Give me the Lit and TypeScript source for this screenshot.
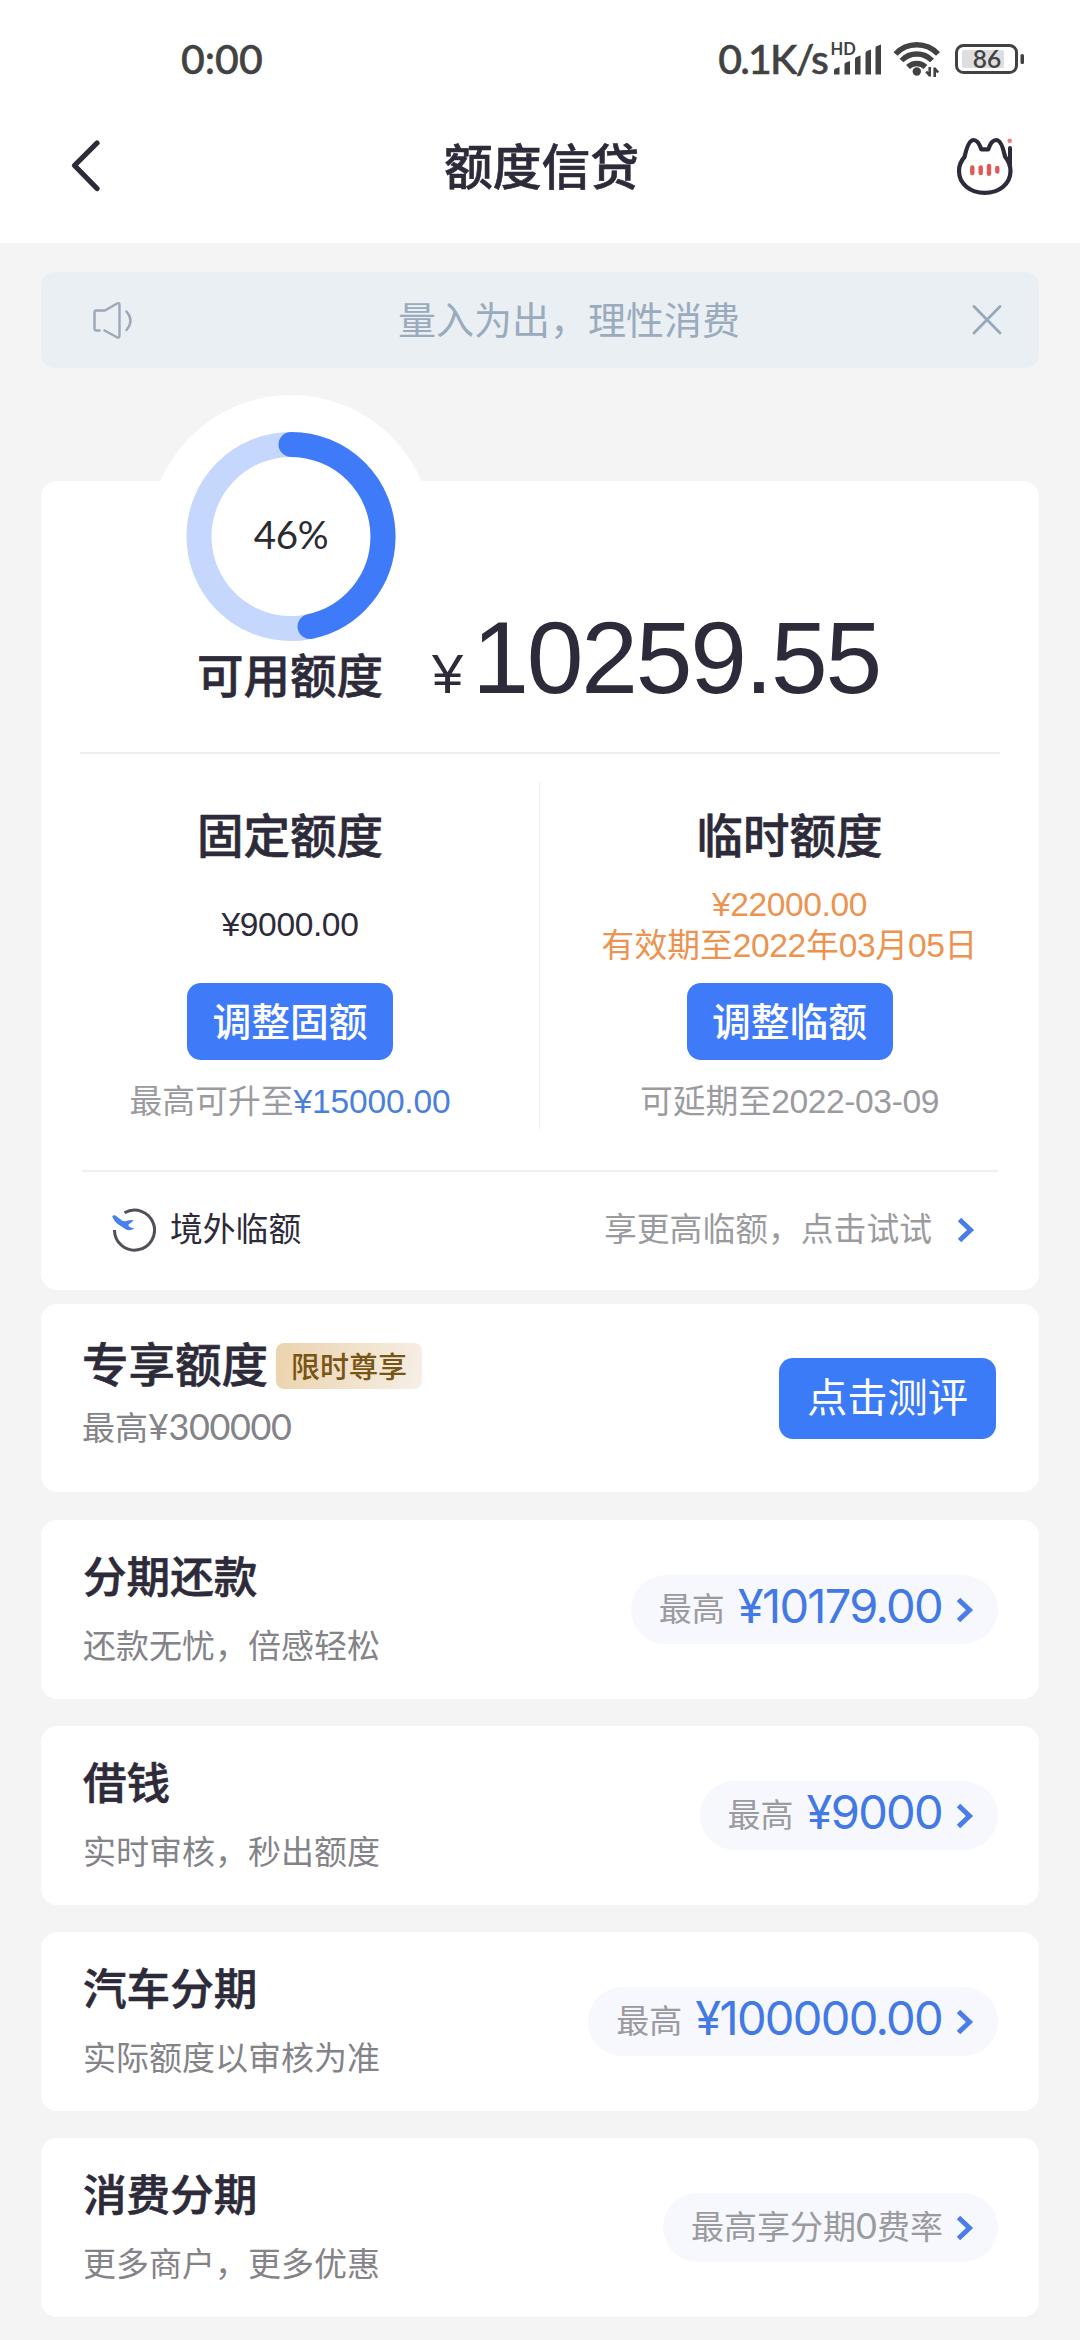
import { LitElement, html, css, nothing } from "lit";
import { customElement, property } from "lit/decorators.js";

interface Offer {
  title: string;
  note: string;
  hint: unknown;
  amount?: string;
}

const offers: Offer[] = [
  { title: "分期还款", note: "还款无忧，倍感轻松", hint: "最高", amount: "¥10179.00" },
  { title: "借钱", note: "实时审核，秒出额度", hint: "最高", amount: "¥9000" },
  { title: "汽车分期", note: "实际额度以审核为准", hint: "最高", amount: "¥100000.00" },
  { title: "消费分期", note: "更多商户，更多优惠", hint: html`最高享分期<span class="zero">0</span>费率` },
];

const chevron = html`<svg class="chevron" width="18" height="26" viewBox="0 0 18 26" fill="none">
  <path d="M2.5 2.5 13.5 13 2.5 23.5" stroke="#4a7de6" stroke-width="5" />
</svg>`;

@customElement("status-bar")
export class StatusBar extends LitElement {
  static styles = css`
    :host {
      display: flex;
      height: 118px;
      box-sizing: border-box;
      padding: 0 55px 0 181px;
      align-items: center;
      color: #424242;
      font-family: Lato, "Noto Sans CJK SC", sans-serif;
      font-weight: 500;
      font-size: 41px;
      line-height: 50px;
      -webkit-text-stroke: 0.5px #424242;
    }
    .time {
      flex: 1;
    }
    .speed {
      letter-spacing: -1.8px;
      margin-right: 2px;
    }
    .icons {
      display: block;
      -webkit-text-stroke: 0;
    }
  `;
  render() {
    return html`<span class="time">0:00</span><span class="speed">0.1K/s</span>
      <svg class="icons" width="196" height="40" viewBox="829 39 196 40">
        <text x="830.5" y="55" font-family="Lato, sans-serif" font-weight="700" font-size="16.5" fill="#424242">HD</text>
        <g fill="#424242">
          <path d="M834 70.5q0-1.5 1.5-2l4-1.5v7.500h-5.500z" />
          <path d="M844.500 64.500q0-1.500 1.500-2l4-1.500v13.500h-5.500z" />
          <path d="M855 59q0-1.500 1.500-2l4-1.500v19h-5.500z" />
          <path d="M865.500 53q0-1.500 1.500-2l4-1.500v25h-5.500z" />
          <path d="M875.500 48q0-1.500 1.500-2l4-1.500v30h-5.500z" />
          <circle cx="916.800" cy="71.500" r="4.200" />
        </g>
        <g fill="none" stroke="#424242" stroke-width="5.400">
          <path d="M895.500 54a29 29 0 0 1 42.500 0" />
          <path d="M901.500 60.500a21 21 0 0 1 30.500 0" />
          <path d="M908 67a12.500 12.500 0 0 1 17.500 0" />
        </g>
        <path d="M929.700 67v9.500M929.700 75.500l-3.500-4M934.700 77v-9.500M934.700 68.500l3.500 4" fill="none" stroke="#424242" stroke-width="2.600" />
        <rect x="962" y="50" width="42" height="18" rx="2" fill="#dedede" />
        <rect x="956.500" y="45.500" width="60" height="27" rx="7" fill="none" stroke="#424242" stroke-width="3" />
        <rect x="1020.500" y="54" width="3.500" height="10" rx="1.500" fill="#424242" />
        <text x="987" y="67.500" text-anchor="middle" font-family="Lato, sans-serif" font-weight="600" font-size="24.500" fill="#424242">86</text>
      </svg>`;
  }
}

@customElement("title-bar")
export class TitleBar extends LitElement {
  static styles = css`
    :host {
      display: flex;
      height: 125px;
      box-sizing: border-box;
      padding: 12px 61px 42px 70px;
      align-items: center;
      justify-content: space-between;
      color: #2d2b3a;
      font-family: "Noto Sans CJK SC", sans-serif;
    }
    .back {
      width: 68px;
    }
    h1 {
      margin: 0;
      padding: 0 6px 4px 0;
      font-size: 48.8px;
      line-height: 60px;
      font-weight: 500;
      -webkit-text-stroke: 0.6px #2d2b3a;
    }
  `;
  render() {
    return html`<svg class="back" width="68" height="54" viewBox="0 0 68 54" fill="none">
        <path d="M27 4 4.500 26.500 27 49.500" stroke="#2d2b3a" stroke-width="5.300" stroke-linecap="round" stroke-linejoin="round" />
      </svg>
      <h1>额度信贷</h1>
      <svg width="68" height="70" viewBox="0 1 68 70" fill="none" stroke-linecap="round" stroke-linejoin="round">
        <path
          d="M13.500 27C15.500 18 18 10 22.500 10C26 10 28.500 14 30.300 19.300H37.300C39 14 41.500 10 45.300 10C49.500 10 52 17 54 26.500C57.500 31 59.500 35.500 59.500 41C59.500 54 48 62.800 33.700 62.800C19.500 62.800 8 54 8 41C8 35.500 10 31 13.500 27Z"
          stroke="#2d2b3a"
          stroke-width="4.200"
        />
        <path d="M59 18V36" stroke="#2d2b3a" stroke-width="4" />
        <circle cx="58.700" cy="10.700" r="2.300" fill="#ee7f7a" />
        <path d="M21.300 37.500V43M29.700 37.500V43M38 36V43.700M46.300 38V41.500" stroke="#e05a55" stroke-width="4.400" />
      </svg>`;
  }
}

@customElement("notice-bar")
export class NoticeBar extends LitElement {
  static styles = css`
    :host {
      display: flex;
      height: 96px;
      box-sizing: border-box;
      padding: 0 35px 0 50px;
      align-items: center;
      border-radius: 14px;
      background: #eaeff3;
      color: #9aabbd;
      font-family: "Noto Sans CJK SC", sans-serif;
      font-size: 38px;
      line-height: 50px;
    }
    .text {
      flex: 1;
      padding: 0 0 4px 263px;
    }
  `;
  render() {
    return html`<svg width="44" height="42" viewBox="0 0 44 42" fill="none" stroke="#9aa8b8" stroke-width="2.400" stroke-linecap="round" stroke-linejoin="round">
        <path d="M8.500 31.500H5.500Q3.500 31.500 3.500 29.500V13.500Q3.500 11.500 5.500 11.500H14L26 4.500Q28.500 3.500 28.500 6V36Q28.500 39.500 26 38.300L13.500 31.500" />
        <path d="M35.500 12.500Q43.500 21.500 35.500 31" />
      </svg>
      <span class="text">量入为出，理性消费</span>
      <svg width="34" height="34" viewBox="0 0 34 34" fill="none" stroke="#97a8bb" stroke-width="2.800" stroke-linecap="round">
        <path d="M4 3.500 30 30M30 3.500 4 30" />
      </svg>`;
  }
}

@customElement("usage-gauge")
export class UsageGauge extends LitElement {
  @property({ type: Number }) percent = 0;
  static styles = css`
    :host {
      display: grid;
      place-items: center;
      width: 284px;
      height: 284px;
      border-radius: 50%;
      background: #fff;
      color: #2b2a30;
      font-family: Lato, sans-serif;
      font-size: 38.5px;
      letter-spacing: -0.4px;
      line-height: 46px;
    }
    svg,
    span {
      grid-area: 1 / 1;
    }
    span {
      padding-bottom: 6px;
    }
  `;
  render() {
    const r = 92;
    const round = 2 * Math.PI * r;
    return html`<svg width="210" height="210" viewBox="-105 -104.500 210 210" fill="none" stroke-width="25">
        <circle r=${r} stroke="#c5d7fd" />
        <circle
          r=${r}
          stroke="#3f7bf8"
          stroke-linecap="round"
          transform="rotate(-90)"
          stroke-dasharray="${(round * (this.percent + 0.6)) / 100} ${round}"
        />
      </svg>
      <span>${this.percent}%</span>`;
  }
}

@customElement("limit-card")
export class LimitCard extends LitElement {
  static styles = css`
    :host {
      display: block;
      position: relative;
      height: 809px;
      border-radius: 16px;
      background: #fff;
      color: #2d2b3a;
      font-family: "Noto Sans CJK SC", sans-serif;
    }
    usage-gauge {
      position: absolute;
      left: 108px;
      top: -86px;
    }
    .balance {
      position: relative;
      display: flex;
      align-items: baseline;
      box-sizing: border-box;
      height: 273px;
      margin: 0 39px;
      padding: 122px 0 0 117px;
      border-bottom: 2px solid #efeff0;
    }
    .label,
    h2 {
      margin: 0;
      font-size: 46.5px;
      line-height: 60px;
      font-weight: 500;
      -webkit-text-stroke: 0.6px #2d2b3a;
    }
    .yen {
      margin-left: 49px;
      font: 56px/60px "Liberation Sans", sans-serif;
    }
    .sum {
      margin-left: 9px;
      letter-spacing: -2.2px;
      font: 102px/110px "Liberation Sans", sans-serif;
    }
    .split {
      display: grid;
      grid-template-columns: 1fr 1fr;
      height: 347px;
      margin-top: 28px;
    }
    .part {
      display: flex;
      flex-direction: column;
      align-items: center;
      box-sizing: border-box;
      padding-top: 21px;
    }
    .part:first-child {
      border-right: 1px solid #eeeeef;
    }
    .value {
      display: flex;
      flex-direction: column;
      align-items: center;
      justify-content: center;
      height: 78px;
      margin: 23px 0 19px;
      font-size: 32.8px;
      line-height: 38px;
    }
    .num {
      font-family: "Liberation Sans", sans-serif;
      font-size: 33.6px;
      letter-spacing: -0.4px;
    }
    .value.warm {
      color: #ec9350;
    }
    button {
      border: 0;
      box-sizing: border-box;
      padding: 0 0 6px;
      width: 206px;
      height: 77px;
      border-radius: 14px;
      background: #3f7bf8;
      color: #fff;
      font: 500 38.8px/70px "Noto Sans CJK SC", sans-serif;
    }
    .tip {
      margin-top: 15px;
      font-size: 32.8px;
      line-height: 48px;
      color: #9b9b9f;
    }
    .tip .blue {
      color: #4a7fdc;
      letter-spacing: -0.2px;
    }
    .abroad {
      display: flex;
      align-items: center;
      height: 117px;
      margin: 41px 41px 0;
      padding: 0 23px 0 28px;
      box-sizing: border-box;
      border-top: 2px solid #efeff0;
      font-size: 32.8px;
      line-height: 44px;
    }
    .name {
      margin-left: 14px;
      flex: 1;
      padding-bottom: 5px;
    }
    .more {
      color: #9b9b9f;
      margin-right: 25px;
      padding-bottom: 6px;
    }
  `;
  render() {
    return html`<usage-gauge percent="46"></usage-gauge>
      <div class="balance">
        <span class="label">可用额度</span><span class="yen">¥</span><span class="sum">10259.55</span>
      </div>
      <div class="split">
        <div class="part">
          <h2>固定额度</h2>
          <div class="value"><span class="num">¥9000.00</span></div>
          <button>调整固额</button>
          <div class="tip">最高可升至<span class="num blue">¥15000.00</span></div>
        </div>
        <div class="part">
          <h2>临时额度</h2>
          <div class="value warm">
            <span class="num">¥22000.00</span>
            <span>有效期至<span class="num">2022</span>年<span class="num">03</span>月<span class="num">05</span>日</span>
          </div>
          <button>调整临额</button>
          <div class="tip">可延期至<span class="num">2022-03-09</span></div>
        </div>
      </div>
      <div class="abroad">
        <svg width="46" height="46" viewBox="0 0 46 46" fill="none">
          <path d="M14.500 5.800A20 20 0 1 1 4.500 23" stroke="#505058" stroke-width="3" />
          <path
            d="M2.200 9.500Q3.200 7.500 5.500 8.500L12 13.500Q14.500 15 18 13.500Q21 12.500 24 13.500L18.500 17.500Q17.500 20 24.500 21.500Q20 24.500 16 22.500L10 18.500Q5 16 2.200 9.500Z"
            fill="#4a7fee"
          />
        </svg>
        <span class="name">境外临额</span>
        <span class="more">享更高临额，点击试试</span>
        ${chevron}
      </div>`;
  }
}

@customElement("exclusive-card")
export class ExclusiveCard extends LitElement {
  static styles = css`
    :host {
      display: flex;
      align-items: center;
      justify-content: space-between;
      box-sizing: border-box;
      height: 188px;
      padding: 0 43px 0 41px;
      border-radius: 16px;
      background: #fff;
      color: #2d2b3a;
      font-family: "Noto Sans CJK SC", sans-serif;
    }
    .head {
      display: flex;
      align-items: center;
      gap: 8px;
    }
    h2 {
      margin: 0;
      font-size: 46.5px;
      line-height: 62px;
      font-weight: 500;
      -webkit-text-stroke: 0.6px #2d2b3a;
    }
    .badge {
      margin-top: 8px;
      padding: 0 15px 2px;
      border-radius: 8px;
      background: linear-gradient(100deg, #ebd3ad, #f6efe6);
      color: #785514;
      font-size: 29px;
      line-height: 44px;
      font-weight: 500;
    }
    .note {
      margin: 9px 0 15px;
      font-size: 33px;
      line-height: 48px;
      color: #838388;
    }
    .digits {
      font-family: Lato, sans-serif;
      font-size: 36px;
      letter-spacing: -0.4px;
    }
    button {
      border: 0;
      box-sizing: border-box;
      padding: 0 0 6px;
      width: 217px;
      height: 81px;
      border-radius: 14px;
      background: #3b7bf7;
      color: #fff;
      font: 40.3px/74px "Noto Sans CJK SC", sans-serif;
    }
  `;
  render() {
    return html`<div>
        <div class="head">
          <h2>专享额度</h2>
          <span class="badge">限时尊享</span>
        </div>
        <div class="note">最高<span class="digits">¥300000</span></div>
      </div>
      <button>点击测评</button>`;
  }
}

@customElement("offer-card")
export class OfferCard extends LitElement {
  @property({ attribute: false }) offer!: Offer;
  static styles = css`
    :host {
      display: flex;
      align-items: center;
      justify-content: space-between;
      box-sizing: border-box;
      height: 179px;
      padding: 0 41px 0 42px;
      border-radius: 16px;
      background: #fff;
      color: #2d2b3a;
      font-family: "Noto Sans CJK SC", sans-serif;
    }
    h3 {
      margin: 0 0 20px;
      font-size: 43.6px;
      line-height: 56px;
      font-weight: 500;
      -webkit-text-stroke: 0.6px #2d2b3a;
    }
    .note {
      font-size: 33px;
      line-height: 44px;
      margin-bottom: 7px;
      color: #838388;
    }
    .pill {
      display: flex;
      align-items: center;
      height: 69px;
      padding: 0 24px 0 28px;
      border-radius: 35px;
      background: #f6f8fd;
      color: #9b9b9f;
      font-size: 33px;
      line-height: 60px;
    }
    .hint {
      padding-bottom: 6px;
    }
    .zero {
      font-family: Lato, sans-serif;
      font-size: 36px;
      line-height: 40px;
    }
    .amount {
      margin-left: 13px;
      padding-bottom: 7px;
      font-family: Inter, sans-serif;
      font-size: 47px;
      letter-spacing: -1.7px;
      color: #4279e4;
    }
    .chevron {
      margin-left: 13px;
    }
    .amount + .chevron {
      margin-left: 14px;
    }
  `;
  render() {
    const o = this.offer;
    return html`<div>
        <h3>${o.title}</h3>
        <div class="note">${o.note}</div>
      </div>
      <div class="pill">
        <span class="hint">${o.hint}</span>
        ${o.amount ? html`<span class="amount">${o.amount}</span>` : nothing} ${chevron}
      </div>`;
  }
}

@customElement("app-root")
export class AppRoot extends LitElement {
  static styles = css`
    :host {
      display: block;
      width: 1080px;
      height: 2340px;
      overflow: hidden;
      background: #f4f4f4;
    }
    header {
      background: #fff;
    }
    main {
      padding: 29px 41px 0;
    }
    limit-card {
      margin-top: 113px;
    }
    exclusive-card {
      margin-top: 14px;
    }
    .offers {
      display: grid;
      gap: 27px;
      margin-top: 28px;
    }
  `;
  render() {
    return html`<header><status-bar></status-bar><title-bar></title-bar></header>
      <main>
        <notice-bar></notice-bar>
        <limit-card></limit-card>
        <exclusive-card></exclusive-card>
        <div class="offers">${offers.map((o) => html`<offer-card .offer=${o}></offer-card>`)}</div>
      </main>`;
  }
}
